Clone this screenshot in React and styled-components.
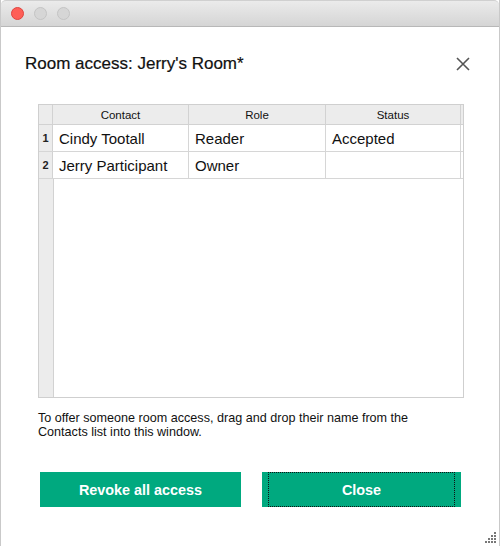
import React from "react";
import styled, { createGlobalStyle } from "styled-components";

const GlobalStyle = createGlobalStyle`
  html, body {
    margin: 0;
    padding: 0;
    background: #ffffff;
  }
  body {
    font-family: "Liberation Sans", Arial, sans-serif;
    color: #111;
  }
`;

const rows = [
  { contact: "Cindy Tootall", role: "Reader", status: "Accepted" },
  { contact: "Jerry Participant", role: "Owner", status: "" },
];

function App() {
  return (
    <>
      <GlobalStyle />
      <Window>
        <TitleBar>
          <Light color="#fe5f57" edge="#e0443e" />
          <Light color="#d6d6d6" edge="#c4c4c4" />
          <Light color="#d6d6d6" edge="#c4c4c4" />
        </TitleBar>

        <Body>
          <HeadRow>
            <Heading>Room access: Jerry's Room*</Heading>
            <CloseX aria-label="Close">
              <svg width="14" height="14" viewBox="0 0 14 14">
                <path d="M1 1 L13 13 M13 1 L1 13" stroke="#555" strokeWidth="1.6" fill="none" />
              </svg>
            </CloseX>
          </HeadRow>

          <Table>
            <HeaderRow>
              <Corner />
              <HeadCell>Contact</HeadCell>
              <HeadCell>Role</HeadCell>
              <HeadCell>Status</HeadCell>
            </HeaderRow>
            {rows.map((r, i) => (
              <DataRow key={r.contact}>
                <RowNum>{i + 1}</RowNum>
                <Cell>{r.contact}</Cell>
                <Cell>{r.role}</Cell>
                <Cell>{r.status}</Cell>
              </DataRow>
            ))}
            <Filler>
              <FillerGutter />
            </Filler>
          </Table>

          <Note>
            To offer someone room access, drag and drop their name from the
            <br />
            Contacts list into this window.
          </Note>

          <Buttons>
            <Button>Revoke all access</Button>
            <Button focused>Close</Button>
          </Buttons>
        </Body>

        <Grip width="14" height="14" viewBox="0 0 14 14">
          {[
            [11, 2], [11, 5], [8, 5], [11, 8], [8, 8], [5, 8],
            [11, 11], [8, 11], [5, 11], [2, 11],
          ].map(([x, y]) => (
            <rect key={`${x}-${y}`} x={x} y={y} width="2" height="2" fill="#777" />
          ))}
        </Grip>
      </Window>
    </>
  );
}

const Window = styled.div`
  position: relative;
  width: 500px;
  height: 546px;
  box-sizing: border-box;
  border-left: 1px solid #c9c9c9;
  border-right: 1px solid #c9c9c9;
  background: #fff;
  display: flex;
  flex-direction: column;
  overflow: hidden;
`;

const TitleBar = styled.div`
  height: 27px;
  flex: none;
  display: flex;
  align-items: center;
  gap: 10px;
  padding-left: 10px;
  background: linear-gradient(#ebebeb, #d5d5d5);
  border-top: 1px solid #d0d0d0;
  border-bottom: 1px solid #b8b8b8;
  border-radius: 5px 5px 0 0;
  box-sizing: border-box;
`;

const Light = styled.span`
  width: 13px;
  height: 13px;
  border-radius: 50%;
  box-sizing: border-box;
  background: ${(p) => p.color};
  border: 1px solid ${(p) => p.edge};
`;

const Body = styled.div`
  padding: 0 0 0 24px;
  display: flex;
  flex-direction: column;
`;

const HeadRow = styled.div`
  display: flex;
  align-items: center;
  justify-content: space-between;
  height: 22px;
  margin-top: 26px;
  padding-right: 29px;
`;

const Heading = styled.h1`
  margin: 0;
  font-size: 17px;
  font-weight: normal;
  color: #111;
  -webkit-text-stroke: 0.2px #111;
`;

const CloseX = styled.button`
  border: 0;
  background: none;
  padding: 0;
  display: flex;
  cursor: pointer;
`;

const Table = styled.div`
  margin: 29px 0 0 13px;
  width: 426px;
  height: 294px;
  box-sizing: border-box;
  border: 1px solid #cfcfcf;
  display: flex;
  flex-direction: column;
`;

const columns = "14px 136px 137px 135px";

const HeaderRow = styled.div`
  display: grid;
  grid-template-columns: ${columns};
  height: 20px;
  background: #ececec;
  border-bottom: 1px solid #d2d2d2;
  box-sizing: border-box;
`;

const Corner = styled.div`
  border-right: 1px solid #d2d2d2;
`;

const HeadCell = styled.div`
  display: flex;
  align-items: center;
  justify-content: center;
  font-size: 11.5px;
  color: #111;
  border-right: 1px solid #d2d2d2;
`;

const DataRow = styled.div`
  display: grid;
  grid-template-columns: ${columns};
  height: 27px;
  border-bottom: 1px solid #d6d6d6;
  box-sizing: border-box;
`;

const RowNum = styled.div`
  display: flex;
  align-items: center;
  justify-content: center;
  background: #ececec;
  font-size: 11px;
  font-weight: bold;
  color: #222;
  border-right: 1px solid #d2d2d2;
`;

const Cell = styled.div`
  display: flex;
  align-items: center;
  padding-left: 6px;
  font-size: 15px;
  color: #111;
  border-right: 1px solid #d6d6d6;
`;

const Filler = styled.div`
  flex: 1;
  display: flex;
`;

const FillerGutter = styled.div`
  width: 14px;
  background: #ececec;
  border-right: 1px solid #d2d2d2;
`;

const Note = styled.p`
  margin: 13px 0 0 13px;
  font-size: 12.6px;
  line-height: 14px;
  color: #111;
`;

const Buttons = styled.div`
  display: grid;
  grid-template-columns: 201px 199px;
  column-gap: 21px;
  margin: 33px 0 0 15px;
`;

const Button = styled.button`
  position: relative;
  height: 35px;
  border: 0;
  outline: none;
  background: #00a97f;
  color: #fff;
  font-family: "Liberation Sans", Arial, sans-serif;
  font-size: 14.4px;
  font-weight: bold;
  cursor: pointer;

  &::after {
    content: "";
    display: ${(p) => (p.focused ? "block" : "none")};
    position: absolute;
    inset: 0 6px 0 6px;
    border: 1px dotted #111;
  }
`;

const Grip = styled.svg`
  position: absolute;
  right: 2px;
  bottom: 2px;
`;

export default App;
